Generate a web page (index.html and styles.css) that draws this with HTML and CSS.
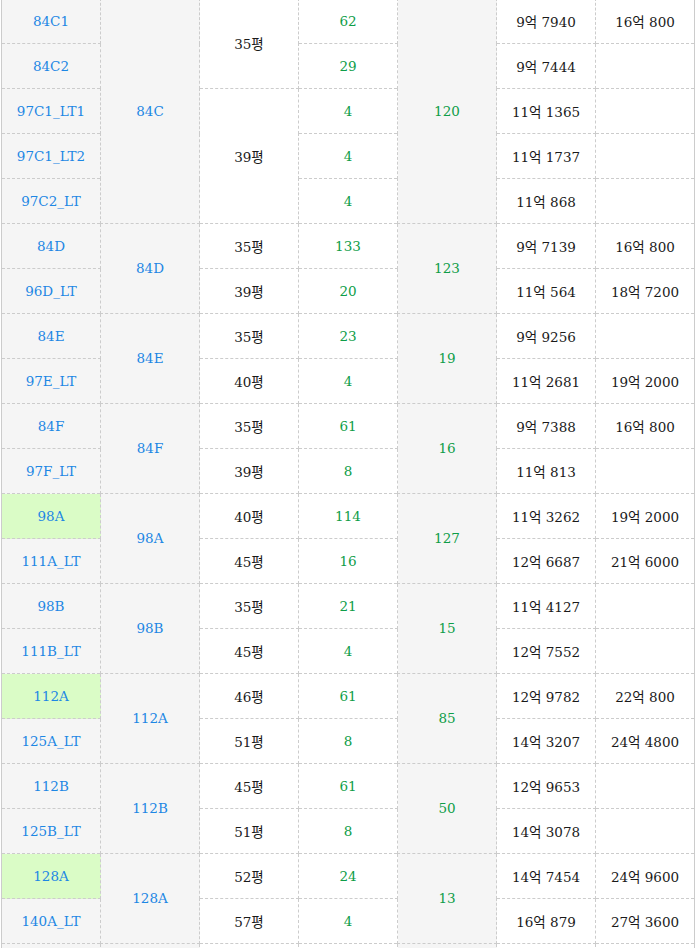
FILE: index.html
```html
<!DOCTYPE html>
<html lang="ko">
<head>
<meta charset="utf-8">
<title>평형별 정보</title>
<link rel="stylesheet" href="styles.css">
</head>
<body>
<table class="grid">
<tbody>
<tr><td class="type">84C1</td><td class="group" rowspan="5">84C</td><td class="area" rowspan="2">35평</td><td class="count">62</td><td class="total" rowspan="5">120</td><td class="price">9억 7940</td><td class="price">16억 800</td></tr>
<tr><td class="type">84C2</td><td class="count">29</td><td class="price">9억 7444</td><td class="price"></td></tr>
<tr><td class="type">97C1_LT1</td><td class="area" rowspan="3">39평</td><td class="count">4</td><td class="price">11억 1365</td><td class="price"></td></tr>
<tr><td class="type">97C1_LT2</td><td class="count">4</td><td class="price">11억 1737</td><td class="price"></td></tr>
<tr><td class="type">97C2_LT</td><td class="count">4</td><td class="price">11억 868</td><td class="price"></td></tr>

<tr><td class="type">84D</td><td class="group" rowspan="2">84D</td><td class="area">35평</td><td class="count">133</td><td class="total" rowspan="2">123</td><td class="price">9억 7139</td><td class="price">16억 800</td></tr>
<tr><td class="type">96D_LT</td><td class="area">39평</td><td class="count">20</td><td class="price">11억 564</td><td class="price">18억 7200</td></tr>

<tr><td class="type">84E</td><td class="group" rowspan="2">84E</td><td class="area">35평</td><td class="count">23</td><td class="total" rowspan="2">19</td><td class="price">9억 9256</td><td class="price"></td></tr>
<tr><td class="type">97E_LT</td><td class="area">40평</td><td class="count">4</td><td class="price">11억 2681</td><td class="price">19억 2000</td></tr>

<tr><td class="type">84F</td><td class="group" rowspan="2">84F</td><td class="area">35평</td><td class="count">61</td><td class="total" rowspan="2">16</td><td class="price">9억 7388</td><td class="price">16억 800</td></tr>
<tr><td class="type">97F_LT</td><td class="area">39평</td><td class="count">8</td><td class="price">11억 813</td><td class="price"></td></tr>

<tr><td class="type hl">98A</td><td class="group" rowspan="2">98A</td><td class="area">40평</td><td class="count">114</td><td class="total" rowspan="2">127</td><td class="price">11억 3262</td><td class="price">19억 2000</td></tr>
<tr><td class="type">111A_LT</td><td class="area">45평</td><td class="count">16</td><td class="price">12억 6687</td><td class="price">21억 6000</td></tr>

<tr><td class="type">98B</td><td class="group" rowspan="2">98B</td><td class="area">35평</td><td class="count">21</td><td class="total" rowspan="2">15</td><td class="price">11억 4127</td><td class="price"></td></tr>
<tr><td class="type">111B_LT</td><td class="area">45평</td><td class="count">4</td><td class="price">12억 7552</td><td class="price"></td></tr>

<tr><td class="type hl">112A</td><td class="group" rowspan="2">112A</td><td class="area">46평</td><td class="count">61</td><td class="total" rowspan="2">85</td><td class="price">12억 9782</td><td class="price">22억 800</td></tr>
<tr><td class="type">125A_LT</td><td class="area">51평</td><td class="count">8</td><td class="price">14억 3207</td><td class="price">24억 4800</td></tr>

<tr><td class="type">112B</td><td class="group" rowspan="2">112B</td><td class="area">45평</td><td class="count">61</td><td class="total" rowspan="2">50</td><td class="price">12억 9653</td><td class="price"></td></tr>
<tr><td class="type">125B_LT</td><td class="area">51평</td><td class="count">8</td><td class="price">14억 3078</td><td class="price"></td></tr>

<tr><td class="type hl">128A</td><td class="group" rowspan="2">128A</td><td class="area">52평</td><td class="count">24</td><td class="total" rowspan="2">13</td><td class="price">14억 7454</td><td class="price">24억 9600</td></tr>
<tr><td class="type">140A_LT</td><td class="area">57평</td><td class="count">4</td><td class="price">16억 879</td><td class="price">27억 3600</td></tr>

<tr><td class="type"></td><td class="group"></td><td class="area"></td><td class="count"></td><td class="total"></td><td class="price"></td><td class="price"></td></tr>
</tbody>
</table>
</body>
</html>
```

FILE: styles.css
```css
html, body {
  margin: 0;
  padding: 0;
  background: #ffffff;
}

body {
  padding-left: 1px;
  font-family: "DejaVu Serif", "Noto Sans CJK KR", serif;
  font-size: 13.5px;
  color: #1a1a1a;
}

.grid {
  margin-top: -2px;
  width: 694px;
  table-layout: fixed;
  border-collapse: collapse;
  border-left: 1px solid #cccccc;
  border-right: 1px solid #cccccc;
}

.grid td {
  height: 43px;
  padding: 0 0 1px;
  border: 1px dashed #cccccc;
  text-align: center;
  vertical-align: middle;
  white-space: nowrap;
}

.grid td.type:first-child {
  border-left: 1px solid #cccccc;
}

.type {
  background: #f5f5f5;
  color: #1d87e4;
}

.type.hl {
  background: #dafcc6;
}

.group {
  background: #f5f5f5;
  color: #1d87e4;
}

.area {
  color: #1a1a1a;
}

.count {
  color: #0e9d48;
}

.total {
  background: #f5f5f5;
  color: #0e9d48;
}

.price {
  color: #1a1a1a;
}
```
